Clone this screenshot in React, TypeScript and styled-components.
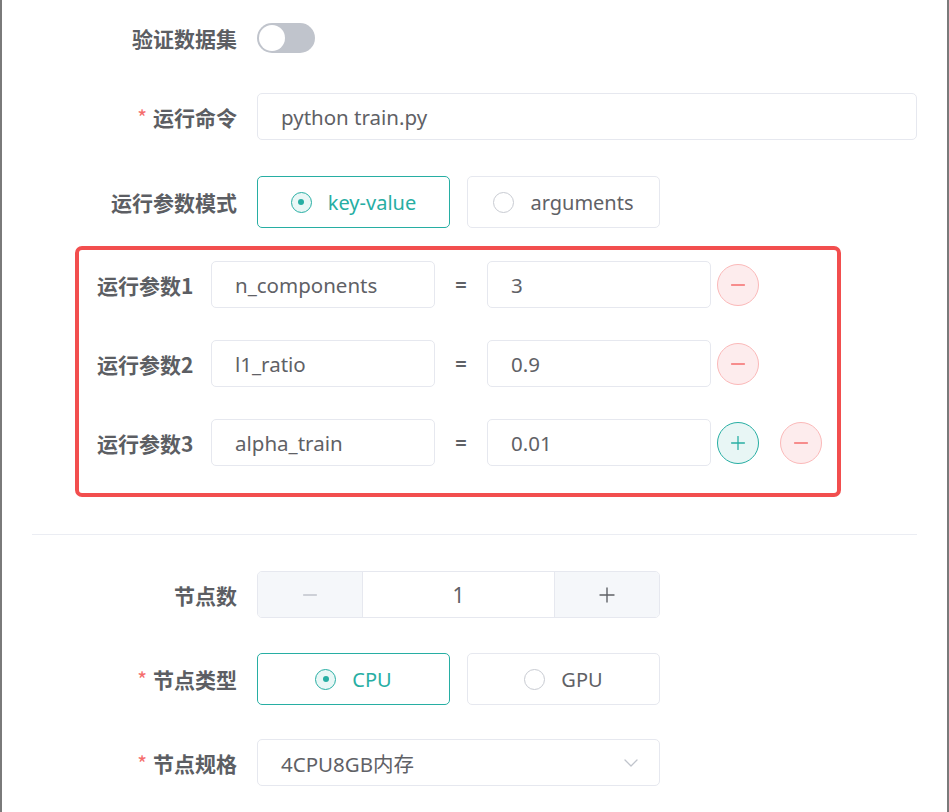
import React from 'react';
import styled, { createGlobalStyle, css } from 'styled-components';
import { ChevronDown, Minus, Plus } from 'lucide-react';

const TEAL = '#27aea3';
const RED = '#f56c6c';
const TEXT = '#5f6166';
const LINE = '#e6e8ef';

const GlobalStyle = createGlobalStyle`
	html, body {
		margin: 0;
		padding: 0;
		background: #fff;
	}
	body {
		font-family: 'Noto Sans', 'Noto Sans CJK SC', sans-serif;
		color: ${TEXT};
	}
	* {
		box-sizing: border-box;
	}
`;

const Page = styled.div`
	width: 949px;
	height: 812px;
	overflow: hidden;
	border-left: 2px solid #7a7a7a;
	border-right: 2px solid #7a7a7a;
	padding-top: 14px;
`;

const FormItem = styled.div<{ $mb: number; $h?: number }>`
	display: flex;
	align-items: center;
	min-height: ${p => p.$h ?? 47}px;
	margin-bottom: ${p => p.$mb}px;
	padding-right: 30px;
`;

const Label = styled.div<{ $required?: boolean }>`
	flex: 0 0 255px;
	padding-right: 20px;
	text-align: right;
	font-family: 'Noto Sans CJK SC', sans-serif;
	font-size: 21px;
	font-weight: 700;
	color: #5c5e63;
	line-height: 28px;

	${p =>
		p.$required &&
		css`
			&::before {
				content: '*';
				color: ${RED};
				margin-right: 6px;
				font-weight: 400;
			}
		`}
`;

const Control = styled.div`
	flex: 1 1 auto;
	display: flex;
	align-items: center;
`;

const SwitchTrack = styled.div<{ $on?: boolean }>`
	width: 58px;
	height: 30px;
	border-radius: 15px;
	background: ${p => (p.$on ? TEAL : '#c0c4cc')};
	padding: 2px;
	display: flex;
	justify-content: ${p => (p.$on ? 'flex-end' : 'flex-start')};
	margin-top: -1px;
`;

const SwitchKnob = styled.div`
	width: 26px;
	height: 26px;
	border-radius: 50%;
	background: #fff;
`;

const Input = styled.div<{ $width?: number }>`
	width: ${p => (p.$width ? `${p.$width}px` : '100%')};
	height: 47px;
	border: 1px solid ${LINE};
	border-radius: 5px;
	padding: 0 23px;
	display: flex;
	align-items: center;
	font-size: 20.5px;
	color: ${TEXT};
	background: #fff;
	white-space: nowrap;
`;

const RadioGroup = styled.div`
	display: flex;
	gap: 17px;
`;

const RadioBox = styled.div<{ $checked?: boolean }>`
	width: 193px;
	height: 52px;
	border: 1px solid ${p => (p.$checked ? TEAL : LINE)};
	border-radius: 5px;
	display: flex;
	align-items: center;
	justify-content: center;
	gap: 16px;
	font-size: 20px;
	color: ${p => (p.$checked ? TEAL : TEXT)};
`;

const RadioCircle = styled.span<{ $checked?: boolean }>`
	width: 21px;
	height: 21px;
	border-radius: 50%;
	border: 1px solid ${p => (p.$checked ? TEAL : '#c8cbd2')};
	background: ${p => (p.$checked ? '#e9f7f6' : '#fff')};
	display: flex;
	align-items: center;
	justify-content: center;

	&::after {
		content: '';
		width: 6px;
		height: 6px;
		border-radius: 50%;
		background: ${TEAL};
		display: ${p => (p.$checked ? 'block' : 'none')};
	}
`;

const ParamBox = styled.div`
	margin: 0 0 37px 73px;
	width: 766px;
	border: 4px solid #f24e4e;
	border-radius: 7px;
	padding: 11px 0 27px 18px;
	display: flex;
	flex-direction: column;
	gap: 32px;
`;

const ParamRow = styled.div`
	display: flex;
	align-items: center;
	height: 47px;
`;

const ParamLabel = styled.div`
	flex: 0 0 114px;
	font-family: 'Noto Sans CJK SC', sans-serif;
	font-size: 21px;
	font-weight: 700;
	color: #5c5e63;
	line-height: 28px;
	white-space: nowrap;
`;

const Equals = styled.div`
	flex: 0 0 52px;
	text-align: center;
	font-size: 20px;
	font-weight: 700;
	color: ${TEXT};
`;

const CircleBtn = styled.div<{ $kind: 'add' | 'remove' }>`
	flex: 0 0 42px;
	width: 42px;
	height: 42px;
	border-radius: 50%;
	margin-left: 6px;
	display: flex;
	align-items: center;
	justify-content: center;
	border: 1px solid ${p => (p.$kind === 'add' ? TEAL : '#fbb9b9')};
	background: ${p => (p.$kind === 'add' ? '#e8f6f5' : '#fdeced')};
	color: ${p => (p.$kind === 'add' ? TEAL : RED)};

	& + & {
		margin-left: 21px;
	}
`;

const Divider = styled.div`
	height: 1px;
	margin: 0 30px 36px 30px;
	background: #ebedf3;
`;

const NumberInput = styled.div`
	width: 403px;
	height: 47px;
	border: 1px solid ${LINE};
	border-radius: 5px;
	display: flex;
	overflow: hidden;
`;

const Stepper = styled.div<{ $disabled?: boolean; $side: 'left' | 'right' }>`
	flex: 0 0 105px;
	background: #f5f7fa;
	display: flex;
	align-items: center;
	justify-content: center;
	color: ${p => (p.$disabled ? '#c0c4cc' : TEXT)};
	${p => (p.$side === 'left' ? `border-right: 1px solid ${LINE};` : `border-left: 1px solid ${LINE};`)}
`;

const NumberValue = styled.div`
	flex: 1 1 auto;
	display: flex;
	align-items: center;
	justify-content: center;
	font-size: 21px;
	color: ${TEXT};
`;

const Select = styled(Input)`
	justify-content: space-between;
	padding-right: 16px;
`;

const params = [
	{ key: 'n_components', value: '3' },
	{ key: 'l1_ratio', value: '0.9' },
	{ key: 'alpha_train', value: '0.01' },
];

const App = () => {
	return (
		<Page>
			<GlobalStyle />
			<FormItem $mb={31} $h={48}>
				<Label>验证数据集</Label>
				<Control>
					<SwitchTrack>
						<SwitchKnob />
					</SwitchTrack>
				</Control>
			</FormItem>

			<FormItem $mb={36}>
				<Label $required>运行命令</Label>
				<Control>
					<Input>python train.py</Input>
				</Control>
			</FormItem>

			<FormItem $mb={18} $h={52}>
				<Label>运行参数模式</Label>
				<Control>
					<RadioGroup>
						<RadioBox $checked>
							<RadioCircle $checked />
							key-value
						</RadioBox>
						<RadioBox>
							<RadioCircle />
							arguments
						</RadioBox>
					</RadioGroup>
				</Control>
			</FormItem>

			<ParamBox>
				{params.map((item, index) => (
					<ParamRow key={item.key}>
						<ParamLabel>运行参数{index + 1}</ParamLabel>
						<Input $width={224}>{item.key}</Input>
						<Equals>=</Equals>
						<Input $width={224}>{item.value}</Input>
						{index === params.length - 1 && (
							<CircleBtn $kind="add">
								<Plus size={22} strokeWidth={1.4} />
							</CircleBtn>
						)}
						<CircleBtn $kind="remove">
							<Minus size={22} strokeWidth={1.4} />
						</CircleBtn>
					</ParamRow>
				))}
			</ParamBox>

			<Divider />

			<FormItem $mb={35}>
				<Label>节点数</Label>
				<Control>
					<NumberInput>
						<Stepper $side="left" $disabled>
							<Minus size={22} strokeWidth={1.4} />
						</Stepper>
						<NumberValue>1</NumberValue>
						<Stepper $side="right">
							<Plus size={24} strokeWidth={1.4} />
						</Stepper>
					</NumberInput>
				</Control>
			</FormItem>

			<FormItem $mb={34} $h={52}>
				<Label $required>节点类型</Label>
				<Control>
					<RadioGroup>
						<RadioBox $checked>
							<RadioCircle $checked />
							CPU
						</RadioBox>
						<RadioBox>
							<RadioCircle />
							GPU
						</RadioBox>
					</RadioGroup>
				</Control>
			</FormItem>

			<FormItem $mb={0}>
				<Label $required>节点规格</Label>
				<Control>
					<Select $width={403}>
						4CPU8GB内存
						<ChevronDown size={24} strokeWidth={1.3} color="#c0c4cc" />
					</Select>
				</Control>
			</FormItem>
		</Page>
	);
};

export default App;
